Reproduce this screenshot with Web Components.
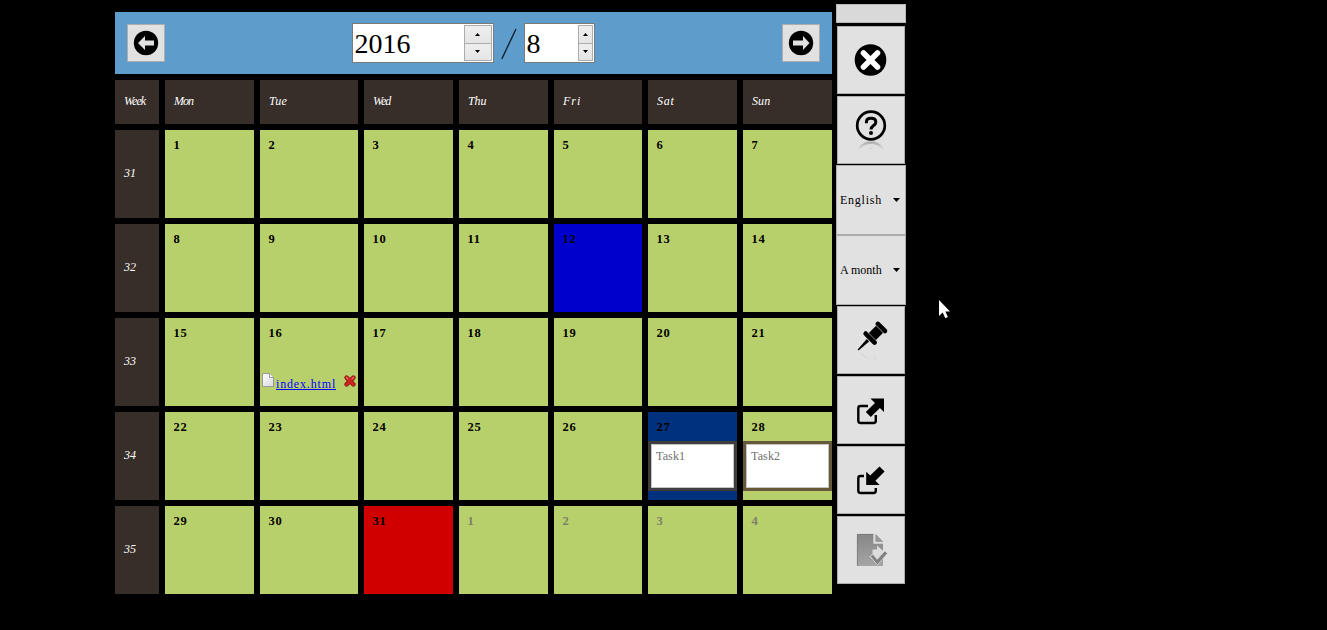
<!DOCTYPE html>
<html lang="en">
<head>
<meta charset="utf-8">
<title>Desktop calendar</title>
<style>
html, body { margin: 0; height: 100%; background: #000; overflow: hidden; }
body { font-family: "Liberation Serif", serif; font-size: 12px; }
</style>
</head>
<body>
<desk-calendar></desk-calendar>
<script>
function define(name, html, setup) {
  customElements.define(name, class extends HTMLElement {
    connectedCallback() {
      if (this.shadowRoot) return;
      const root = this.attachShadow({ mode: "open" });
      root.innerHTML = typeof html === "function" ? html(this) : html;
      if (setup) setup(this, root);
    }
  });
}

const reflection = (id, color) => `<linearGradient id="${id}" x1="0" y1="0" x2="0" y2="1"><stop offset="0" stop-color="${color}"/><stop offset="1" stop-color="#e1e1e1"/></linearGradient>`;

const icons = {
  prev: `<svg width="36" height="36" viewBox="0 0 36 36"><circle cx="18" cy="18" r="12.2" fill="#000"/><path d="M10 18L17 11V15.4H26V20.6H17V25Z" fill="#e1e1e1"/></svg>`,
  next: `<svg width="36" height="36" viewBox="0 0 36 36"><circle cx="18" cy="18" r="12.2" fill="#000"/><path d="M26.5 18L20 11V15.4H10V20.6H20V25Z" fill="#e1e1e1"/></svg>`,
  close: `<svg width="66" height="66" viewBox="0 0 66 66"><circle cx="32.5" cy="33" r="15.8" fill="#000"/><path d="M25.5 26L39.5 40M39.5 26L25.5 40" stroke="#fff" stroke-width="5.6" stroke-linecap="round"/></svg>`,
  help: `<svg width="66" height="66" viewBox="0 0 66 66"><defs>${reflection("r", "#aaa")}</defs><circle cx="33" cy="28.5" r="13.8" fill="none" stroke="#000" stroke-width="2.7"/><path d="M28.4 26.2V25.2C28.4 22.6 30.2 21.3 33 21.3C36 21.3 37.8 22.8 37.8 25.2C37.8 28.8 33 28.4 33 32.6" fill="none" stroke="#000" stroke-width="3"/><circle cx="33" cy="35.9" r="2" fill="#000"/><path d="M19.5 53C23 46 28 44.5 33 44.5S43 46 46.5 53L43 51C40 48 37 47 33 47S26 48 23 51Z" fill="url(#r)"/><path d="M31 52Q33 49 35 52Z" fill="#cfcfcf"/></svg>`,
  pin: `<svg width="66" height="66" viewBox="0 0 66 66"><defs>${reflection("r", "#b5b5b5")}</defs><g transform="translate(35.4 27.8) rotate(45) scale(.94)"><rect x="-7.3" y="-14" width="15.6" height="5" rx="2.5"/><path d="M-4.8 -8.8H5.8V2.4H-4.8Z"/><rect x="-9.2" y="2.4" width="18.4" height="5" rx="2.5"/><path d="M-1.8 8.2H1.8L.7 23H-.7Z"/><path d="M-6 -9.1H7M-7 2.3H7" stroke="#aaa" stroke-width=".6"/></g><path d="M20 44.5L33 53L37 50L40 53H31Z" fill="url(#r)"/></svg>`,
  export: `<svg width="66" height="66" viewBox="0 0 66 66"><path d="M30 29H22.5Q20.3 29 20.3 31.2V43.8Q20.3 46 22.5 46H35.5Q37.8 46 37.8 43.8V38" fill="none" stroke="#000" stroke-width="2.4"/><path d="M32.5 21.5H46V35L41.9 31L32.8 40L27.8 35L37 26Z" fill="#000" stroke="#e1e1e1" stroke-width="1" paint-order="stroke"/></svg>`,
  import: `<svg width="66" height="66" viewBox="0 0 66 66"><path d="M26 29H22.5Q20.3 29 20.3 31.2V43.8Q20.3 46 22.5 46H35.5Q37.8 46 37.8 43.8V41" fill="none" stroke="#000" stroke-width="2.4"/><path d="M28.2 24.8L32.2 28.6L41.5 19.5L46.6 24.4L37.4 33.8L41.6 38H28.2Z" fill="#000"/></svg>`,
  apply: `<svg width="66" height="66" viewBox="0 0 66 66"><defs><linearGradient id="g" x1="0" y1="0" x2="0" y2="1"><stop offset="0" stop-color="#868686"/><stop offset="1" stop-color="#a5a5a5"/></linearGradient></defs><path d="M19 17H36V26H45V49H19Z" fill="url(#g)"/><path d="M19.4 49V17.4H36" fill="none" stroke="#777" stroke-width=".8"/><path d="M37.8 17.6L44.7 24.6H37.8Z" fill="#999" stroke="#888" stroke-width=".6"/><path d="M36 17V26H45" fill="none" stroke="#ddd" stroke-width="1.3"/><path d="M34.5 32.5H39V28.5L48.5 37L40 46L31 39.5H34.5Z" fill="#dcdcdc"/><path d="M32.2 39.3L35 37.3L39.2 42.3L47 33.8L49.5 36.4L39.4 48Z" fill="#808080" stroke="#ddd" stroke-width=".8"/></svg>`
};

define("tool-icon", el => `<style>:host,svg{display:block}</style>${icons[el.getAttribute("name")]}`);

define("icon-button", el => `
  <style>
    :host { display: block; box-sizing: border-box; width: 68px; height: 68px; margin: 1px; background: #e1e1e1; border: 1px solid #adadad; }
    :host([small]) { width: 38px; height: 38px; margin: 0; }
  </style>
  <tool-icon name="${el.getAttribute("icon")}"></tool-icon>`);

define("tool-select", `
  <style>
    :host { display: flex; box-sizing: border-box; width: 70px; height: 70px; align-items: center; justify-content: space-between; padding: 0 5px 0 3px; background: #e1e1e1; border: 1px solid #adadad; color: #000; white-space: nowrap; }
  </style>
  <span><slot></slot></span>
  <svg width="7" height="4" viewBox="0 0 7 4"><path d="M0 0H7L3.5 4Z"/></svg>`);

define("spin-box", `
  <style>
    :host { display: flex; box-sizing: border-box; height: 40px; width: var(--w); padding: 1px; background: #fff; border: 1px solid #7a7a7a; font: 28px "Liberation Serif", serif; letter-spacing: 0; color: #000; }
    span { flex: 1; line-height: 38px; padding-left: 1px; }
    div { width: var(--bw); box-sizing: border-box; display: grid; grid-template-rows: 1fr 1fr; background: #acacac; gap: 1px; border: 1px solid #acacac; }
    i { display: grid; place-items: center; background: linear-gradient(#eee, #e5e5e5); }
  </style>
  <span><slot></slot></span>
  <div>
    <i><svg width="5" height="3"><path d="M0 3L2.5 0L5 3Z"/></svg></i>
    <i><svg width="5" height="3"><path d="M0 0H5L2.5 3Z"/></svg></i>
  </div>`);

define("month-bar", `
  <style>
    :host { display: flex; box-sizing: border-box; height: 62px; padding: 0 12px; align-items: center; justify-content: space-between; background: #5d9ccb; }
    div { display: flex; align-items: center; margin-right: 1px; }
  </style>
  <icon-button small icon="prev"></icon-button>
  <div>
    <spin-box style="--w:142px;--bw:28px">2016</spin-box>
    <svg width="30" height="40"><path d="M7.8 36L22 6" stroke="#10202c" stroke-width="1.4"/></svg>
    <spin-box style="--w:71px;--bw:15px">8</spin-box>
  </div>
  <icon-button small icon="next"></icon-button>`);

define("head-cell", `
  <style>
    :host { display: flex; align-items: center; box-sizing: border-box; padding: 0 0 1px 9px; background: #372d29; color: #fff; font-style: italic; }
  </style>
  <slot></slot>`);

define("week-cell", `
  <style>
    :host { display: flex; align-items: center; box-sizing: border-box; padding: 0 0 1px 9px; background: #372d29; color: #fff; font-style: italic; }
  </style>
  <slot></slot>`);

define("day-cell", el => `
  <style>
    :host { display: flex; flex-direction: column; box-sizing: border-box; min-width: 0; background: #b8d06b; color: #000; }
    :host([kind="today"]) { background: #0000cd; }
    :host([kind="start"]) { background: #00317f; }
    :host([kind="end"]) { background: #d00000; }
    :host([kind="other"]) { color: #7c8169; }
    b { height: 29px; box-sizing: border-box; padding: 8px 0 0 8.5px; font: bold 12.5px/14px "Liberation Serif", serif; letter-spacing: .75px; }
  </style>
  <b>${el.getAttribute("day")}</b><slot></slot>`);

define("file-link", `
  <style>
    :host { display: flex; margin-top: 26px; padding-left: 2px; height: 17px; }
    a { color: #00f; width: 60px; margin: 4px 8px 0 2px; height: 14px; line-height: 14px; letter-spacing: .84px; text-decoration: underline; }
    svg { flex: none; }
    .x { margin-top: 2px; }
  </style>
  <svg width="12" height="14"><defs><linearGradient id="p" x2="1" y2="1"><stop stop-color="#fff"/><stop offset="1" stop-color="#d8d8df"/></linearGradient></defs><path d="M.5 .5H7.5L11.5 4.5V13.5H.5Z" fill="url(#p)" stroke="#999"/><path d="M7.5 .5V4.5H11.5" fill="#f7f7f7" stroke="#999"/></svg>
  <a><slot></slot></a>
  <svg class="x" width="12" height="12"><path d="M2.6 2.6L9.4 9.4M9.4 2.6L2.6 9.4" stroke="#8b1512" stroke-width="4.4" stroke-linecap="round"/><path d="M2.6 2.6L9.4 9.4M9.4 2.6L2.6 9.4" stroke="#d0261f" stroke-width="2.8" stroke-linecap="round"/><path d="M2.2 2.2L4.2 4.2M9.8 2.2L7.8 4.2" stroke="#f3776b" stroke-width="1.2"/></svg>`);

define("task-note", `
  <style>
    :host { display: block; box-sizing: border-box; height: 50px; border: 3px solid var(--frame); }
    div { box-sizing: border-box; height: 44px; background: #fff; border: 1px solid #c4c4c4; padding: 4px 4px; line-height: 14px; letter-spacing: .15px; color: #707070; }
  </style>
  <div><slot></slot></div>`);

define("month-grid", () => {
  // Tracking evens out every heading to about six pixels per letter.
  const heads = { Week: -.9, Mon: -1, Tue: .2, Wed: -1, Thu: -.1, Fri: 1, Sat: .7, Sun: .1 };
  let out = Object.entries(heads).map(([d, ls]) => `<head-cell style="letter-spacing:${ls}px">${d}</head-cell>`).join("");
  const kinds = { 12: "today", 27: "start", 31: "end" };
  const content = {
    16: "<file-link>index.html</file-link>",
    27: '<task-note style="--frame:#3e3e3e">Task1</task-note>',
    28: '<task-note style="--frame:#65593a">Task2</task-note>'
  };
  for (let i = 0; i < 35; i++) {
    if (i % 7 === 0) out += `<week-cell>${31 + i / 7}</week-cell>`;
    const n = i + 1, kind = n > 31 ? "other" : kinds[n] || "normal";
    out += `<day-cell day="${n > 31 ? n - 31 : n}" kind="${kind}">${content[n] || ""}</day-cell>`;
  }
  return `<style>:host { display: grid; gap: 6px; grid-template-columns: 44px 89px 98px 89px 89px 88px 89px 89px; grid-template-rows: 44px repeat(5, 88px); }</style>${out}`;
});

define("side-tools", `
  <style>
    :host { display: block; width: 70px; }
    .grip { box-sizing: border-box; height: 19px; margin-bottom: 3px; background: #d9d9d9; border: 1px solid #b8b8b8; }
  </style>
  <div class="grip"></div>
  <icon-button icon="close"></icon-button>
  <icon-button icon="help" style="margin-top:2px"></icon-button>
  <tool-select style="letter-spacing:.75px">English</tool-select>
  <tool-select>A month</tool-select>
  <icon-button icon="pin"></icon-button>
  <icon-button icon="export" style="margin-top:2px"></icon-button>
  <icon-button icon="import" style="margin-top:2px"></icon-button>
  <icon-button icon="apply" style="margin-top:2px"></icon-button>`);

define("mouse-pointer", `
  <style>:host { display: block; position: absolute; left: 938px; top: 299px; }</style>
  <svg width="14" height="21"><path d="M1 1V17L4.7 13.5L7.3 19.2L9.9 18L7.4 12.5H12Z" fill="#fff"/></svg>`);

define("desk-calendar", `
  <style>
    :host { display: flex; gap: 4px; padding: 4px 0 0 115px; }
    main { display: flex; flex-direction: column; gap: 6px; width: 717px; padding-top: 8px; }
  </style>
  <main><month-bar></month-bar><month-grid></month-grid></main>
  <side-tools></side-tools>
  <mouse-pointer></mouse-pointer>`);
</script>
</body>
</html>
